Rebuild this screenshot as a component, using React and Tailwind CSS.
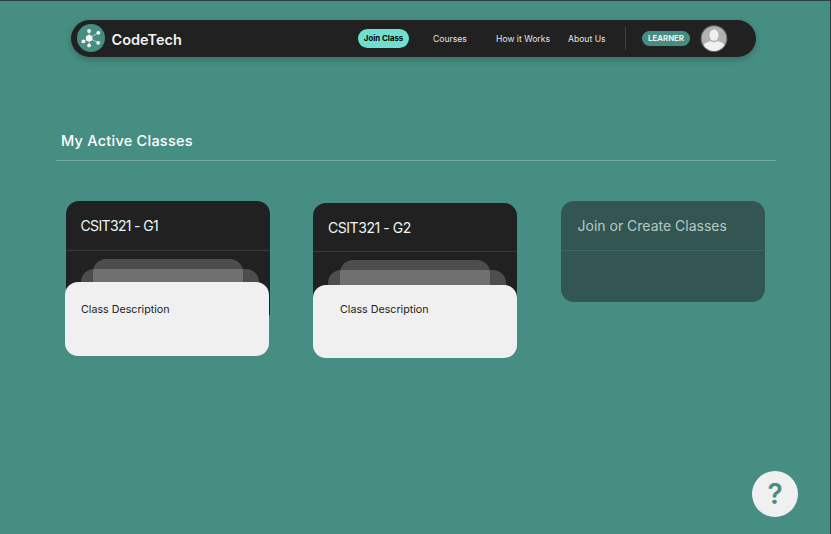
import React from 'react';

function Logo() {
  return (
    <svg viewBox="0 0 28 28" className="mb-px h-7 w-7 shrink-0">
      <circle cx="14" cy="14" r="14" fill="#468e82" />
      <g stroke="#f0f0f0" strokeWidth="0.6">
        <path d="M12.3 14.2 12.1 6.9M12.3 14.2 21.3 8.8M12.3 14.2 21.3 18.8M12.3 14.2 12.1 21.4M12.3 14.2 6.4 17.4" />
      </g>
      <g fill="#f5f5f5">
        <circle cx="12.2" cy="14.2" r="3.3" />
        <circle cx="12.1" cy="7" r="1.9" />
        <circle cx="21.3" cy="8.8" r="1.9" />
        <circle cx="21.2" cy="18.8" r="1.9" />
        <circle cx="12.1" cy="21.4" r="1.9" />
        <circle cx="6.4" cy="17.4" r="1.9" />
      </g>
    </svg>
  );
}

function Avatar() {
  return (
    <svg viewBox="0 0 28 28" className="h-7 w-7 shrink-0">
      <defs>
        <clipPath id="face"><circle cx="14" cy="13.6" r="12.4" /></clipPath>
      </defs>
      <circle cx="14" cy="13.6" r="12.9" fill="#b2b2b2" stroke="#5c6c69" strokeWidth="1.1" />
      <g clipPath="url(#face)" fill="#f0f0f0">
        <ellipse cx="14" cy="10.2" rx="4.5" ry="5.6" />
        <path d="M2.5 28V22.5C3 18.2 7 17 10.5 15.9Q14 18.6 17.5 15.9C21 17 25 18.2 25.5 22.5V28Z" />
      </g>
    </svg>
  );
}

function Header() {
  return (
    <header className="ml-[71px] mt-5 flex h-[37px] w-[685px] items-center rounded-full bg-[#212121] pl-[6px] shadow-[0_3px_6px_rgba(0,0,0,0.2)]">
      <Logo />
      <span className="ml-[6.5px] w-[246.5px] pt-[3px] text-[14.5px] font-semibold leading-none text-[#f0f0f0]">CodeTech</span>
      <button className="mb-[1px] flex h-[19px] w-[51px] shrink-0 items-center justify-center whitespace-nowrap rounded-full bg-[#6fdfd0] pt-px text-[7.8px] font-bold text-black">Join Class</button>
      <nav className="flex shrink-0 items-center whitespace-nowrap pt-[2px] text-[8.6px] leading-none text-[#e4e4e4]">
        <a className="ml-6 w-[63px]">Courses</a>
        <a className="w-[72px]">How it Works</a>
        <a className="w-[57px]">About Us</a>
      </nav>
      <div className="h-[23px] w-px shrink-0 bg-[#414141]" />
      <span className="ml-4 flex h-[15px] w-12 shrink-0 items-center justify-center rounded-full bg-[#468e82] text-[7.8px] font-bold text-[#f0f0f0]">LEARNER</span>
      <div className="ml-[10px] flex"><Avatar /></div>
    </header>
  );
}

function ClassCard({ title, className, titleClass, descClass }) {
  return (
    <article className={`w-[204px] ${className}`}>
      <div className="h-[114px] rounded-t-[13px] bg-[#212121]">
        <h2 className={`border-b border-[#393939] pt-[17px] text-[14px] leading-4 text-[#edf5f3] ${titleClass}`}>{title}</h2>
        <div className="relative h-9 overflow-hidden">
          <div className="absolute left-[27px] top-[8px] h-10 w-[150px] rounded-[13px] bg-white/20" />
          <div className="absolute left-[15px] top-[18px] h-10 w-[178px] rounded-[13px] bg-white/20" />
        </div>
      </div>
      <div className={`relative rounded-[13px] bg-[#f0f0f0] text-[10.7px] leading-4 text-[#212121] ${descClass}`}>Class Description</div>
    </article>
  );
}

export default function App() {
  return (
    <div className="relative flex h-[534px] w-[831px] flex-col overflow-hidden border-r border-t border-[#29413e] bg-[#468e82] font-['Inter',sans-serif]">
      <div className="-mt-px flex flex-col">
        <Header />
        <section className="ml-14 mt-[74px] w-[720px]">
          <h1 className="h-[30px] border-b border-[#73a9a0] pl-[5px] text-[14.5px] font-medium leading-[19px] tracking-[0.25px] text-white">My Active Classes</h1>
        </section>
        <main className="ml-[66px] mt-10 flex items-start">
          <ClassCard title="CSIT321 - G1" className="" titleClass="h-[50px] pl-[14.5px] tracking-[-0.65px]" descClass="-ml-px mr-px -mt-[33px] h-[74px] pl-4 pt-5" />
          <ClassCard title="CSIT321 - G2" className="ml-[43px] mt-[2px]" titleClass="h-[49px] pl-[15px] tracking-[-0.45px]" descClass="-mt-8 h-[73px] pl-[27px] pt-[17px]" />
          <article className="ml-[43.5px] h-[101px] w-[204px] rounded-[13px] bg-[#335652]">
            <h2 className="h-[50px] whitespace-nowrap border-b border-[#3d665d] pl-[17px] pt-[17px] text-[14px] leading-4 text-[#b5c8c5]">Join or Create Classes</h2>
          </article>
        </main>
      </div>
      <button className="absolute bottom-[17px] right-[32px] flex h-[46px] w-[46px] items-center justify-center rounded-full bg-[#f0f0f0]" aria-label="Help">
        <span className="text-[28px] font-semibold leading-none text-[#468e82]">?</span>
      </button>
    </div>
  );
}
